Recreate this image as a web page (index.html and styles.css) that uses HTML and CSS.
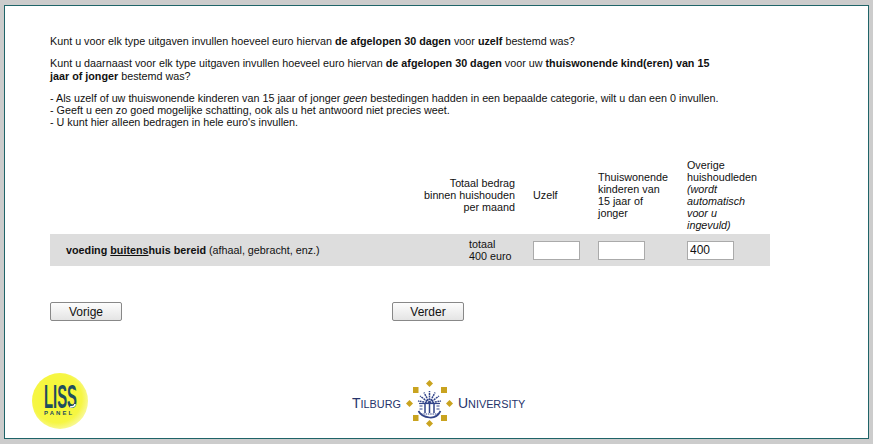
FILE: index.html
```html
<!DOCTYPE html>
<html lang="nl">
<head>
<meta charset="utf-8">
<title>Uitgaven</title>
<link rel="stylesheet" href="styles.css">
</head>
<body>
<main class="panel">
  <section class="intro">
    <p>Kunt u voor elk type uitgaven invullen hoeveel euro hiervan <b>de afgelopen 30 dagen</b> voor <b>uzelf</b> bestemd was?</p>
    <p class="tall">Kunt u daarnaast voor elk type uitgaven invullen hoeveel euro hiervan <b>de afgelopen 30 dagen</b> voor uw <b>thuiswonende kind(eren) van 15 jaar of jonger</b> bestemd was?</p>
    <p>- Als uzelf of uw thuiswonende kinderen van 15 jaar of jonger <i>geen</i> bestedingen hadden in een bepaalde categorie, wilt u dan een 0 invullen.<br>- Geeft u een zo goed mogelijke schatting, ook als u het antwoord niet precies weet.<br>- U kunt hier alleen bedragen in hele euro's invullen.</p>
  </section>
  <section class="grid-table">
    <div class="head head-total">Totaal bedrag<br>binnen huishouden<br>per maand</div>
    <div class="head">Uzelf</div>
    <div class="head">Thuiswonende<br>kinderen van<br>15 jaar of<br>jonger</div>
    <div class="head">Overige<br>huishoudleden<br><i>(wordt<br>automatisch<br>voor u<br>ingevuld)</i></div>
    <div class="row-main">
      <span class="row-label"><b>voeding <u>buitens</u>huis bereid</b> (afhaal, gebracht, enz.)</span>
      <span class="row-total">totaal<br>400 euro</span>
    </div>
    <div class="row-cell"><input class="amount" type="text"></div>
    <div class="row-cell"><input class="amount" type="text"></div>
    <div class="row-cell"><input class="amount" type="text" value="400"></div>
  </section>
  <nav class="buttons">
    <button class="btn" type="button">Vorige</button>
    <button class="btn" type="button">Verder</button>
  </nav>
  <footer class="logos">
    <svg class="liss" width="58" height="58" viewBox="0 0 58 58">
      <defs>
        <radialGradient id="ly" cx="0.45" cy="0.45" r="0.55">
          <stop offset="0" stop-color="#f6f62f"/>
          <stop offset="0.8" stop-color="#f6f644"/>
          <stop offset="1" stop-color="#f8f88c"/>
        </radialGradient>
      </defs>
      <circle cx="29" cy="29" r="28" fill="url(#ly)"/>
      <text class="liss-word" transform="translate(13 36) scale(.45 1)">LISS</text>
      <circle cx="43.5" cy="19" r="1.3" fill="#f6f62f"/>
      <path d="M39 35c3 0 5-1 5-3" stroke="#fff" stroke-width="1.6" fill="none"/>
      <text class="liss-sub" x="13" y="43">PANEL</text>
    </svg>
    <div class="tilburg">
      <span class="uni uni-left">T<small>ILBURG</small></span>
      <svg width="47" height="47" viewBox="0 0 47 47">
        <g fill="#c9a31f">
          <path d="M23.5 0l3.5 3.5-3.5 3.5-3.5-3.5z"/>
          <path d="M23.5 40l3.5 3.5-3.5 3.5-3.5-3.5z"/>
          <path d="M3.5 20l3.5 3.5-3.5 3.5-3.5-3.5z"/>
          <path d="M43.5 20l3.5 3.5-3.5 3.5-3.5-3.5z"/>
          <rect x="7" y="7" width="5.5" height="6"/>
          <rect x="35" y="7" width="6" height="6"/>
          <rect x="7" y="35" width="5.5" height="6"/>
          <rect x="35" y="35" width="6" height="6"/>
        </g>
        <g stroke="#33458a" fill="none">
          <path d="M23.5 23V11M23.5 23L18 12.5M23.5 23L29 12.5M23.5 23L14 16M23.5 23L33 16M23.5 23L12 21M23.5 23L35 21" stroke-width="1.5" stroke-dasharray="2 .7"/>
          <path d="M13 23.5h21" stroke-width="1.2"/>
          <path d="M19 24v9M23.5 24v9M28 24v9" stroke-width="1.5"/>
          <path d="M13.5 26h3M13.5 29h3M30.5 26h3M30.5 29h3" stroke-width="1.1"/>
          <path d="M12.5 31c2 4 6 6 11 6.500s9-2.500 11-6.500" stroke-width="1.7"/>
          <path d="M15 34h17" stroke-width="1.2" stroke-dasharray="1.500 .8"/>
        </g>
      </svg>
      <span class="uni uni-right">U<small>NIVERSITY</small></span>
    </div>
  </footer>
</main>
</body>
</html>
```

FILE: styles.css
```css
* { box-sizing: border-box; }
html, body { margin: 0; height: 100%; }
body {
  background: #ccc;
  padding: 5px 4px 5px 4px;
  font: 10.78px "Liberation Sans", Arial, sans-serif;
  color: #111;
}
.panel {
  width: 865px;
  height: 434px;
  background: #fff;
  border: 1px solid #1f6468;
  padding: 29px 98px 0 45px;
}
.intro p { margin: 0 0 10px; }
.intro p.tall { line-height: 13px; margin-bottom: 9px; }
.intro { width: 680px; }
.intro p:last-child { margin-bottom: 0; }
.intro p:nth-child(3) { width: 720px; }
.grid-table {
  display: grid;
  grid-template-columns: 483px 65px 89px 83px;
  margin-top: 31px;
  width: 720px;
}
.head { align-self: center; padding-bottom: 3px; }
.head-total { text-align: right; padding-right: 18px; }
.row-main, .row-cell {
  background: #ddd;
  height: 32px;
  display: flex;
  align-items: center;
}
.row-main { padding-left: 16px; justify-content: space-between; }
.row-total { width: 64px; }
.amount {
  width: 47px;
  height: 19px;
  border: 1px solid #aaa;
  background: #fff;
  padding: 0 2px;
  font: 12px "Liberation Sans", Arial, sans-serif;
  color: #111;
  display: block;
}
.buttons {
  display: flex;
  gap: 270px;
  margin-top: 36px;
}
.btn {
  width: 72px;
  height: 19px;
  padding: 0;
  border: 1px solid #888;
  border-radius: 2px;
  background: linear-gradient(#fdfdfd, #e4e4e4);
  font: 12px "Liberation Sans", Arial, sans-serif;
  color: #111;
}
.logos {
  display: flex;
  align-items: flex-start;
  margin-top: 51px;
  margin-left: -19px;
}
.liss-word { font: 700 33px "Liberation Sans", sans-serif; fill: #1f4e5f; }
.liss-sub { font: 700 6px "Liberation Sans", sans-serif; fill: #1f4e5f; letter-spacing: 2.1px; }
.tilburg {
  display: flex;
  align-items: center;
  gap: 5px;
  margin-left: 263px;
  margin-top: 8px;
  color: #26346b;
  font: 14px/16px "Liberation Sans", sans-serif;
}
.uni small { font-size: 10.85px; }
```
